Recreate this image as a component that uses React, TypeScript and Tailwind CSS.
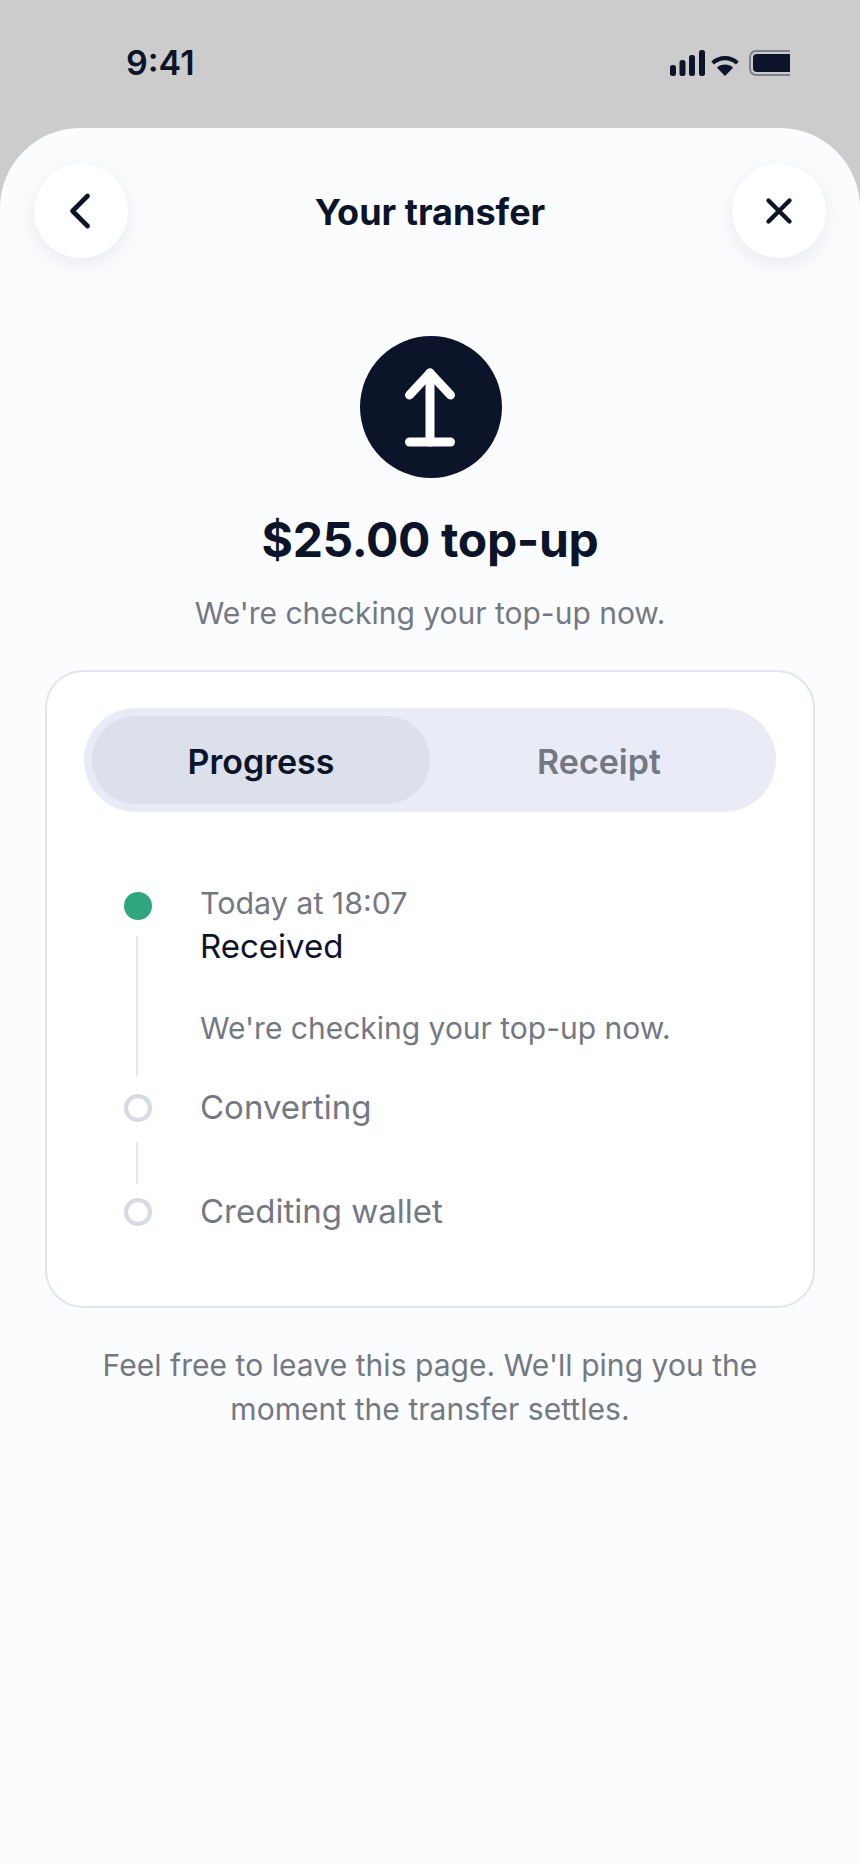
import { ChevronLeft, X } from "lucide-react";

const steps = [
  { id: 1, label: "Converting", rowClass: "pt-[18px]", hasLine: true },
  { id: 2, label: "Crediting wallet", rowClass: "pt-[14px]", hasLine: false },
];

const StatusIcons = () => (
  <div className="flex items-end gap-[6px]">
    <svg width="35" height="26" viewBox="0 0 35 26" fill="#0c142a">
      <rect x="0" y="15" width="6" height="11" rx="2.5" />
      <rect x="9.5" y="10" width="6" height="16" rx="2.5" />
      <rect x="19" y="5" width="6" height="21" rx="2.5" />
      <rect x="29" y="0" width="6" height="26" rx="2.5" />
    </svg>
    <svg width="28" height="20" viewBox="0 0 28 20" fill="#0c142a">
      <path d="M14 0C8.8 0 4 2 0.3 5.4L3 8.6C6 5.9 9.8 4.3 14 4.3s8 1.6 11 4.3l2.7-3.2C24 2 19.2 0 14 0Z" />
      <path d="M14 8.6c-3.1 0-5.9 1.2-8 3.1L14 20l8-8.3c-2.1-1.9-4.9-3.1-8-3.1Z" />
    </svg>
    <div className="ml-[4px] flex h-[26px] w-[41px] items-center rounded-l-[7px] border-y-2 border-l-2 border-[#7f828c] pl-[2px]">
      <div className="h-[18px] w-full rounded-l-[4px] bg-[#0c142a]" />
    </div>
  </div>
);

const RoundButton = ({ children }: { children: React.ReactNode }) => (
  <button className="flex h-[94px] w-[94px] items-center justify-center rounded-full bg-white text-[#0c142a] shadow-[0_6px_20px_rgba(20,30,60,0.08)]">
    {children}
  </button>
);

const App = () => {
  return (
    <div
      className="flex h-[1864px] w-[860px] flex-col overflow-hidden bg-[#cccccc] text-[#0c142a]"
      style={{ fontFamily: "Inter, sans-serif" }}
    >
      <div className="flex h-[128px] shrink-0 items-start justify-between pl-[126px] pr-[70px] pt-[43px]">
        <span className="text-[34px] leading-[40px] font-semibold">9:41</span>
        <div className="pt-[7px]">
          <StatusIcons />
        </div>
      </div>

      <div className="flex flex-1 flex-col rounded-t-[80px] bg-[#fbfcfe] px-[34px]">
        <div className="mt-[36px] flex items-center justify-between">
          <RoundButton>
            <ChevronLeft size={60} strokeWidth={1.9} className="-ml-[3px]" />
          </RoundButton>
          <h1 className="pt-[2px] text-[36px] leading-[44px] font-bold">Your transfer</h1>
          <RoundButton>
            <X size={42} strokeWidth={2.5} />
          </RoundButton>
        </div>

        <div className="mt-[78px] flex flex-col items-center">
          <div className="ml-[2px] flex h-[142px] w-[142px] items-center justify-center rounded-full bg-[#0c142a]">
            <svg width="50" height="80" viewBox="0 0 50 80" fill="none" stroke="white" strokeWidth="9" strokeLinecap="round" strokeLinejoin="round" className="-ml-[2px]">
              <path d="M25 75V6" />
              <path d="M4.5 28L25 6L45.5 28" />
              <path d="M4.5 75H45.5" />
            </svg>
          </div>
          <h2 className="mt-[30px] text-[48px] leading-[64px] font-bold tracking-[-0.35px]">$25.00 top-up</h2>
          <p className="mt-[19px] text-[30px] leading-[44px] text-[#747883]">We're checking your top-up now.</p>
        </div>

        <div className="mx-[11px] mt-[35px] h-[638px] rounded-[38px] border-2 border-[#e2e5ef] bg-white px-[37px] pt-[36px]">
          <div className="flex h-[104px] rounded-full bg-[#e9ecf6] p-[8px]">
            <div className="flex w-[338px] items-center justify-center rounded-full bg-[#dce0eb] pt-[2px] text-[34px] font-semibold">
              Progress
            </div>
            <div className="flex flex-1 items-center justify-center pt-[2px] text-[34px] font-semibold text-[#747883]">
              Receipt
            </div>
          </div>

          <div className="ml-[40px] mt-[80px] flex flex-col">
            <div className="flex gap-[48px]">
              <div className="flex w-[28px] shrink-0 flex-col items-center">
                <div className="h-[28px] w-[28px] rounded-full bg-[#30a67e]" />
                <div className="mt-[16px] h-[140px] w-[2px] -translate-x-[1px] bg-[#e6e7ec]" />
              </div>
              <div className="-mt-[11px]">
                <p className="text-[30.4px] leading-[44px] text-[#747883]">Today at 18:07</p>
                <p className="-mt-[1px] text-[33px] leading-[44px]">Received</p>
                <p className="mt-[38px] text-[30px] leading-[44px] text-[#747883]">We're checking your top-up now.</p>
              </div>
            </div>
            {steps.map((step) => (
              <div key={step.id} className={`flex gap-[48px] ${step.rowClass}`}>
                <div className="flex w-[28px] shrink-0 flex-col items-center">
                  <div className="h-[28px] w-[28px] rounded-full border-[4px] border-[#d8dae3]" />
                  {step.hasLine && (
                    <div className="mt-[20px] h-[42px] w-[2px] -translate-x-[1px] bg-[#e6e7ec]" />
                  )}
                </div>
                <p className="-mt-[9px] text-[33px] leading-[44px] text-[#747883]">{step.label}</p>
              </div>
            ))}
          </div>
        </div>

        <p className="mt-[35px] px-[30px] text-center text-[30px] leading-[44px] tracking-[0.05px] text-[#747883]">
          Feel free to leave this page. We'll ping you the moment the transfer settles.
        </p>
      </div>
    </div>
  );
};

export default App;
